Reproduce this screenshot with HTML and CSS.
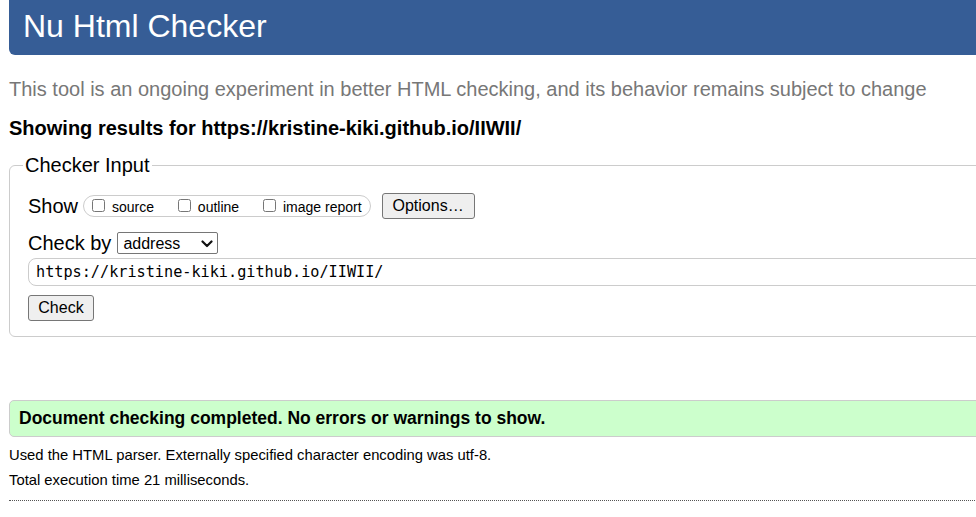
FILE: index.html
```
<!DOCTYPE html>
<html lang="en">
<head>
<meta charset="utf-8">
<title>Nu Html Checker</title>
<link rel="stylesheet" href="styles.css">
</head>
<body>
<div class="page">
  <h1 class="masthead">Nu Html Checker</h1>
  <p class="intro">This tool is an ongoing experiment in better HTML checking, and its behavior remains subject to change</p>
  <p class="showing">Showing results for https://kristine-kiki.github.io/IIWII/</p>
  <fieldset class="checker">
    <legend class="legend">Checker Input</legend>
    <div class="show-row">
      <span class="row-label">Show</span>
      <span class="pill">
        <label class="opt"><input type="checkbox" class="cb"> source</label>
        <label class="opt"><input type="checkbox" class="cb"> outline</label>
        <label class="opt"><input type="checkbox" class="cb"> image report</label>
      </span>
      <button class="btn options" type="button">Options…</button>
    </div>
    <div class="by-row">
      <span class="row-label">Check by</span>
      <span class="select-wrap">
        <select class="select"><option>address</option></select>
        <svg class="chev" width="12" height="8" viewBox="0 0 12 8"><path d="M1.5 1.5 L6 6 L10.5 1.5" fill="none" stroke="#111" stroke-width="2.2" stroke-linecap="round" stroke-linejoin="round"/></svg>
      </span>
    </div>
    <input class="url" type="text" value="https://kristine-kiki.github.io/IIWII/">
    <button class="btn check" type="button">Check</button>
  </fieldset>
  <p class="success">Document checking completed. No errors or warnings to show.</p>
  <p class="detail">Used the HTML parser. Externally specified character encoding was utf-8.</p>
  <p class="detail second">Total execution time 21 milliseconds.</p>
  <hr class="dots">
</div>
</body>
</html>
```
FILE: styles.css
```
html { overflow: hidden; }
body {
  margin: 0;
  padding: 0 0 0 9px;
  font-family: "Liberation Sans", Arial, sans-serif;
  color: #000;
  background: #fff;
}
.page { width: 1120px; }
.masthead {
  margin: 0;
  padding: 6px 14px 9px;
  line-height: 40px;
  font-size: 32px;
  font-weight: normal;
  color: #fff;
  background: #365d96;
  border-radius: 0 0 6px 6px;
}
.intro {
  margin: 22px 0 0;
  font-size: 20px;
  line-height: 24px;
  color: #777;
}
.showing {
  margin: 15px 0 0;
  font-size: 20px;
  line-height: 24px;
  font-weight: bold;
}
.checker {
  margin: 13px 0 0;
  padding: 16px 18px 15px;
  border: 1px solid #ccc;
  border-radius: 6px;
}
.legend {
  padding: 0 2px;
  margin-left: -5px;
  font-size: 20px;
  line-height: 24px;
}
.show-row, .by-row {
  display: flex;
  align-items: center;
}
.show-row { height: 26px; }
.by-row { height: 24px; margin-top: 12px; }
.row-label {
  font-size: 20px;
  line-height: 24px;
}
.pill {
  display: inline-flex;
  align-items: baseline;
  gap: 20px;
  height: 20px;
  margin-left: 5px;
  padding: 0 8px 0 4px;
  border: 1px solid #ccc;
  border-radius: 11px;
  font-size: 14px;
  line-height: 20px;
}
.opt { white-space: nowrap; }
.cb {
  width: 13px;
  height: 13px;
  margin: 3px 3px 3px 4px;
  vertical-align: baseline;
}
.btn {
  box-sizing: border-box;
  height: 26px;
  font-family: "Liberation Sans", Arial, sans-serif;
  font-size: 16px;
  line-height: 20px;
  padding: 2px 9px;
  color: #000;
  background: #efefef;
  border: 1px solid #767676;
  border-radius: 3px;
}
.options { margin-left: 11px; width: 93px; }
.select-wrap {
  position: relative;
  display: inline-block;
  margin-left: 6px;
  height: 22px;
}
.select {
  appearance: none;
  -webkit-appearance: none;
  width: 101px;
  height: 22px;
  margin: 0;
  padding: 0 0 0 5px;
  font-family: "Liberation Sans", Arial, sans-serif;
  font-size: 16px;
  color: #000;
  background: #fff;
  border: 1px solid #767676;
  border-radius: 2px;
}
.chev {
  position: absolute;
  right: 5px;
  top: 8px;
  pointer-events: none;
}
.url {
  display: block;
  box-sizing: border-box;
  width: 100%;
  height: 28px;
  margin: 3px 0 0;
  padding: 0 7px;
  font-family: "DejaVu Sans Mono", "Liberation Mono", monospace;
  font-size: 15.2px;
  color: #000;
  border: 1px solid #ccc;
  border-radius: 8px;
}
.check { display: block; margin-top: 9px; width: 66px; }
.success {
  margin: 63px 0 0;
  padding: 6px 9px 7px;
  font-size: 17.5px;
  line-height: 22px;
  font-weight: bold;
  background: #ccffcc;
  border: 1px solid #ccc;
  border-radius: 5px;
}
.detail {
  margin: 9px 0 0;
  font-size: 14.8px;
  line-height: 18px;
}
.detail.second { margin-top: 7px; }
.dots {
  margin: 11px 0 0;
  border: 0;
  border-top: 1px dotted #555;
  height: 0;
}
```
